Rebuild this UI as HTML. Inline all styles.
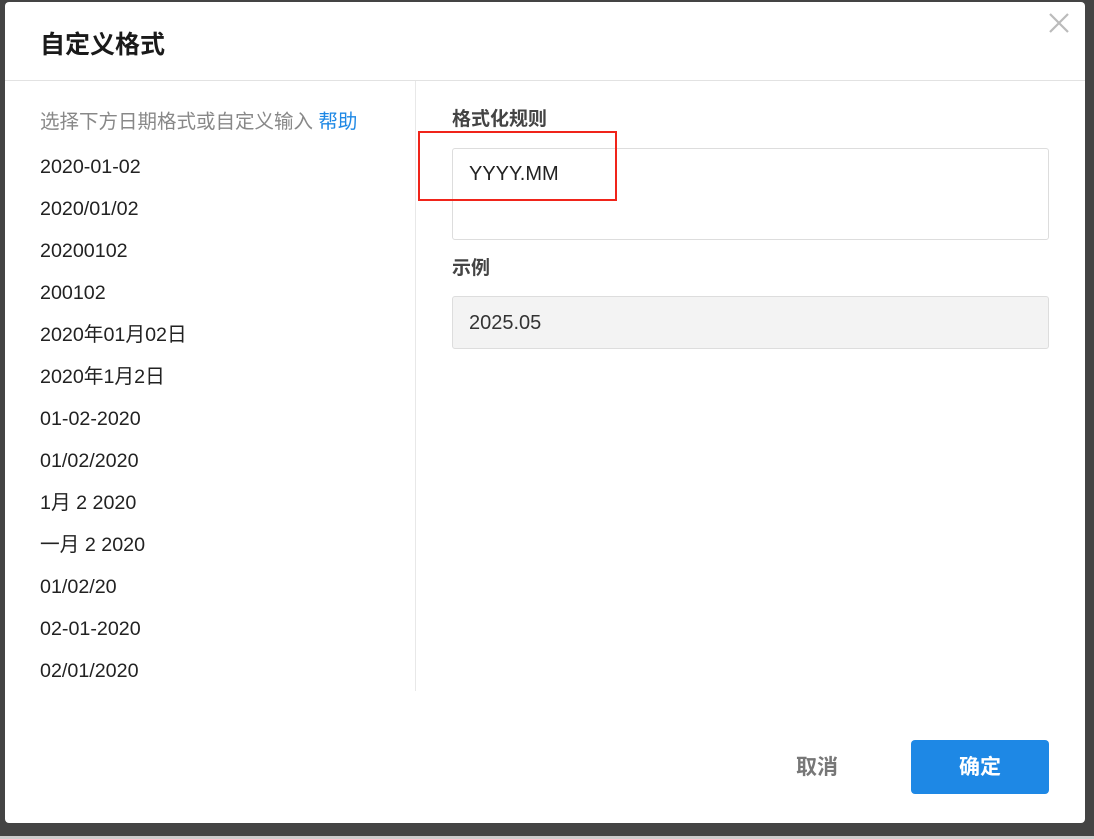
<!DOCTYPE html>
<html><head><meta charset="utf-8"><style>
*{margin:0;padding:0;box-sizing:border-box}
body{width:1094px;height:839px;background:#444;position:relative;overflow:hidden;font-family:"Liberation Sans","Noto Sans CJK SC",sans-serif}
.dlg{position:absolute;left:5px;top:2px;width:1080px;height:821px;background:#fff;border-radius:4px}
.bot{position:absolute;left:0;top:836px;width:1094px;height:3px;background:#ccc}
.t{position:absolute;white-space:nowrap;line-height:24px}
.item{position:absolute;left:40px;font-size:19.7px;line-height:24px;height:24px;color:#222;white-space:nowrap}
</style></head><body>
<div class="dlg"></div>
<div class="bot"></div>
<div class="t" style="left:40px;top:30px;font-size:25px;line-height:30px;font-weight:bold;color:#1a1a1a">自定义格式</div>
<svg style="position:absolute;left:1048px;top:12px" width="22" height="22"><path d="M2 2L20 20M20 2L2 20" stroke="#bbb" stroke-width="2.2"/></svg>
<div style="position:absolute;left:5px;top:80px;width:1080px;height:1px;background:#e2e2e2"></div>
<div style="position:absolute;left:415px;top:81px;width:1px;height:610px;background:#e8e8e8"></div>
<div class="t" style="left:40px;top:110px;font-size:19.5px;color:#888">选择下方日期格式或自定义输入 <span style="color:#1e88e5">帮助</span></div>
<div class="item" style="top:155px">2020-01-02</div>
<div class="item" style="top:197px">2020/01/02</div>
<div class="item" style="top:239px">20200102</div>
<div class="item" style="top:281px">200102</div>
<div class="item" style="top:323px">2020年01月02日</div>
<div class="item" style="top:365px">2020年1月2日</div>
<div class="item" style="top:407px">01-02-2020</div>
<div class="item" style="top:449px">01/02/2020</div>
<div class="item" style="top:491px">1月 2 2020</div>
<div class="item" style="top:533px">一月 2 2020</div>
<div class="item" style="top:575px">01/02/20</div>
<div class="item" style="top:617px">02-01-2020</div>
<div class="item" style="top:659px">02/01/2020</div>
<div class="t" style="left:452px;top:108px;font-size:19px;font-weight:bold;color:#444">格式化规则</div>
<div style="position:absolute;left:452px;top:148px;width:597px;height:92px;border:1px solid #ddd;border-radius:3px"></div>
<div class="t" style="left:469px;top:162px;font-size:20px;color:#222">YYYY.MM</div>
<div style="position:absolute;left:418px;top:131px;width:199px;height:70px;border:2px solid #f0241a"></div>
<div class="t" style="left:452px;top:257px;font-size:19px;font-weight:bold;color:#444">示例</div>
<div style="position:absolute;left:452px;top:296px;width:597px;height:53px;border:1px solid #ddd;border-radius:3px;background:#f3f3f3"></div>
<div class="t" style="left:469px;top:311px;font-size:20px;color:#333">2025.05</div>
<div class="t" style="left:796px;top:756px;font-size:21px;font-weight:bold;color:#777">取消</div>
<div style="position:absolute;left:911px;top:740px;width:138px;height:54px;background:#1e88e5;border-radius:4px;color:#fff;font-size:21px;font-weight:bold;text-align:center;line-height:56px">确定</div>
</body></html>
